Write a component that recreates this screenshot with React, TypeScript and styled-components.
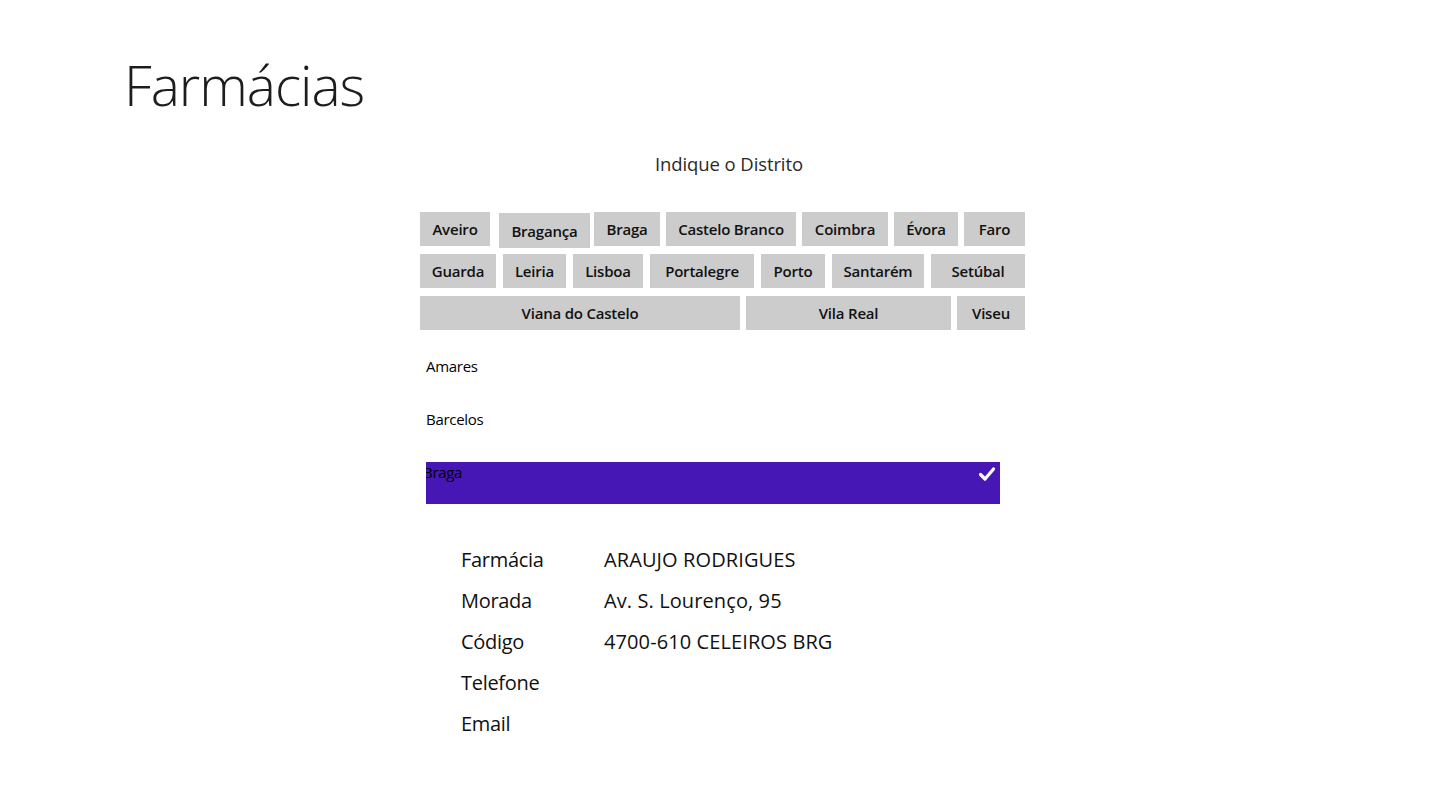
import React from "react";
import styled, { createGlobalStyle } from "styled-components";

const Global = createGlobalStyle`
  html, body { margin: 0; padding: 0; background: #ffffff; }
  body { font-family: "Open Sans", "Noto Sans", sans-serif; color: #111; }
  * { box-sizing: border-box; }
`;

const Page = styled.div`
  width: 1440px;
  height: 810px;
  overflow: hidden;
  background: #fff;
`;

const Header = styled.header`
  padding: 47px 0 0 124px;
  height: 124px;
`;

const Title = styled.h1`
  margin: 0;
  font-family: "Open Sans", sans-serif;
  font-weight: 300;
  font-size: 55px;
  line-height: 76px;
  letter-spacing: -1px;
  color: #1d1d1d;
`;

const Content = styled.main`
  margin-left: 420px;
  width: 606px;
`;

const Prompt = styled.div`
  text-align: center;
  font-size: 18.5px;
  line-height: 28px;
  color: #2a2a2a;
  padding: 26px 0 0 12px;
  height: 88px;
  letter-spacing: -0.1px;
`;

const Grid = styled.div`
  display: flex;
  flex-direction: column;
  gap: 8px;
`;

const Row = styled.div`
  display: flex;
  gap: 6px;
`;

const District = styled.button<{ $w: number; $lead?: number; $drop?: boolean }>`
  width: ${(p) => p.$w}px;
  height: ${(p) => (p.$drop ? 35 : 34)}px;
  margin-left: ${(p) => p.$lead ?? 0}px;
  margin-top: ${(p) => (p.$drop ? 1 : 0)}px;
  margin-bottom: ${(p) => (p.$drop ? -2 : 0)}px;
  flex: none;
  border: none;
  padding: 0;
  background: #cccccc;
  color: #111;
  font-family: "Open Sans", sans-serif;
  font-weight: 600;
  font-size: 15px;
  letter-spacing: -0.2px;
  line-height: ${(p) => (p.$drop ? 36 : 34)}px;
  text-align: center;
  white-space: nowrap;
  cursor: pointer;
`;

const List = styled.ul`
  list-style: none;
  margin: 26px 0 0 6px;
  padding: 0;
  width: 574px;
  display: flex;
  flex-direction: column;
  gap: 11px;
`;

const Item = styled.li<{ $selected?: boolean }>`
  position: relative;
  height: 42px;
  overflow: hidden;
  background: ${(p) => (p.$selected ? "#4617b4" : "transparent")};
  font-size: 15px;
  line-height: 20px;
  color: #000;
  letter-spacing: -0.3px;
`;

const ItemText = styled.span<{ $selected?: boolean }>`
  display: inline-block;
  margin-left: ${(p) => (p.$selected ? "-3px" : "0")};
`;

const Check = styled.svg`
  position: absolute;
  right: 4px;
  top: 4px;
`;

const Details = styled.dl`
  margin: 42px 0 0 461px;
  display: grid;
  grid-template-columns: 143px auto;
  grid-auto-rows: 41px;
  font-size: 20px;
  line-height: 28px;
  color: #111;
`;

const Label = styled.dt`
  margin: 0;
  letter-spacing: -0.3px;
`;

const Value = styled.dd`
  margin: 0;
  letter-spacing: 0.1px;
`;

type D = { name: string; w: number; lead?: number; drop?: boolean };

const rows: D[][] = [
  [
    { name: "Aveiro", w: 70 },
    { name: "Bragança", w: 91, lead: 3, drop: true },
    { name: "Braga", w: 66, lead: -2 },
    { name: "Castelo Branco", w: 130 },
    { name: "Coimbra", w: 86 },
    { name: "Évora", w: 64 },
    { name: "Faro", w: 61 },
  ],
  [
    { name: "Guarda", w: 76 },
    { name: "Leiria", w: 63, lead: 1 },
    { name: "Lisboa", w: 70, lead: 1 },
    { name: "Portalegre", w: 104, lead: 1 },
    { name: "Porto", w: 64, lead: 1 },
    { name: "Santarém", w: 92, lead: 1 },
    { name: "Setúbal", w: 94, lead: 1 },
  ],
  [
    { name: "Viana do Castelo", w: 320 },
    { name: "Vila Real", w: 205 },
    { name: "Viseu", w: 68 },
  ],
];

const towns = ["Amares", "Barcelos", "Braga"];

const info: [string, string][] = [
  ["Farmácia", "ARAUJO RODRIGUES"],
  ["Morada", "Av. S. Lourenço, 95"],
  ["Código", "4700-610 CELEIROS BRG"],
  ["Telefone", ""],
  ["Email", ""],
];

export default function App() {
  return (
    <Page>
      <Global />
      <Header>
        <Title>Farmácias</Title>
      </Header>
      <Content>
        <Prompt>Indique o Distrito</Prompt>
        <Grid>
          {rows.map((r, i) => (
            <Row key={i}>
              {r.map((d) => (
                <District key={d.name} $w={d.w} $lead={d.lead} $drop={d.drop}>
                  {d.name}
                </District>
              ))}
            </Row>
          ))}
        </Grid>
        <List>
          {towns.map((t) => {
            const sel = t === "Braga";
            return (
              <Item key={t} $selected={sel}>
                <ItemText $selected={sel}>{t}</ItemText>
                {sel && (
                  <Check width="18" height="16" viewBox="0 0 18 16">
                    <polyline
                      points="2.5,8.5 7,13 15.5,3"
                      fill="none"
                      stroke="#fff"
                      strokeWidth="3.2"
                      strokeLinecap="round"
                      strokeLinejoin="round"
                    />
                  </Check>
                )}
              </Item>
            );
          })}
        </List>
      </Content>
      <Details>
        {info.map(([k, v]) => (
          <React.Fragment key={k}>
            <Label>{k}</Label>
            <Value>{v}</Value>
          </React.Fragment>
        ))}
      </Details>
    </Page>
  );
}
